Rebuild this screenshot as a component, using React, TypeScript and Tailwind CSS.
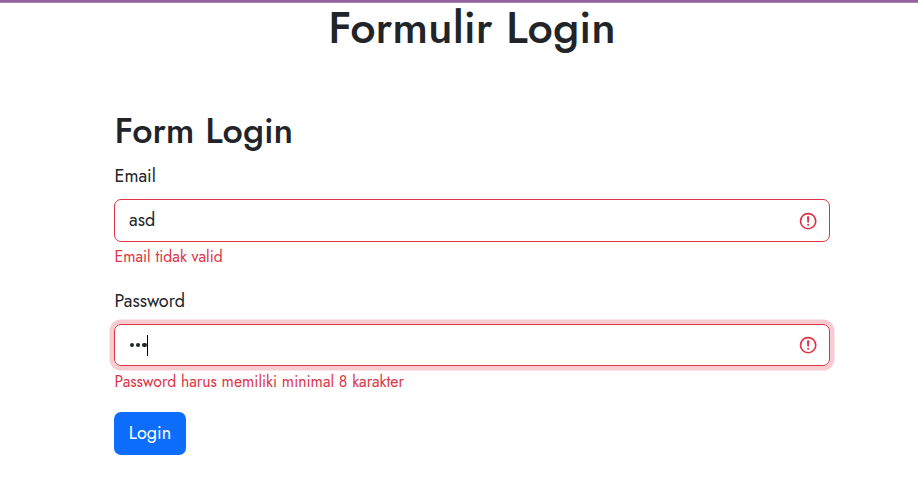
import React from "react";

function ErrorIcon({ className }: { className: string }) {
  return (
    <svg viewBox="0 0 12 12" className={"size-[20.25px] shrink-0 " + className} fill="none" stroke="#dc3545">
      <circle cx="6" cy="6" r="4.5" />
      <path strokeLinejoin="round" d="M5.8 3.6h.4L6 6.5z" />
      <circle cx="6" cy="8.2" r=".6" fill="#dc3545" stroke="none" />
    </svg>
  );
}

type FieldProps = {
  label: string;
  error: string;
  focused?: boolean;
  children: React.ReactNode;
};

function Field({ label, error, focused, children }: FieldProps) {
  return (
    <div className="h-[125px]">
      <div className="flex h-[27px] items-center pl-[0.5px] text-[18px]">
        <span>{label}</span>
      </div>
      <div
        className={
          "mt-[9px] flex items-center justify-between rounded-[7px] border border-[#dc3545] pr-[11px] pl-[14px] text-[18px] " +
          (focused ? "h-[42px] shadow-[0_0_0_4.5px_rgba(220,53,69,0.25)]" : "h-[43px]")
        }
      >
        {children}
        <ErrorIcon className={focused ? "" : "mt-px"} />
      </div>
      <div
        className={
          "flex h-[23px] items-center pl-[0.5px] text-[15.75px] text-[#dc3545] " +
          (focused ? "mt-[4px]" : "mt-[3px]")
        }
      >
        <span>{error}</span>
      </div>
    </div>
  );
}

function PasswordDot() {
  return <i className="size-[4.5px] rounded-full bg-[#212529]" />;
}

export default function App() {
  return (
    <div className="h-[481px] bg-white font-['Jost','Lato',sans-serif] whitespace-nowrap text-[#212529]">
      <div className="h-[3px] border-b border-[#a884b2] bg-[#93629f]" />
      <main className="ml-[114px] w-[716px]">
        <h1 className="flex h-[50px] items-center justify-center text-[45px] font-medium">
          <span>Formulir Login</span>
        </h1>
        <h2 className="mt-[55px] flex h-[44px] items-center pl-[0.5px] text-[36px] font-medium">
          <span>Form Login</span>
        </h2>
        <div className="mt-[11px]">
          <Field label="Email" error="Email tidak valid">
            <span>asd</span>
          </Field>
          <Field label="Password" error="Password harus memiliki minimal 8 karakter" focused>
            <span className="flex items-center">
              <span className="flex gap-[1.75px] pr-[0.5px] pl-[0.5px]">
                <PasswordDot />
                <PasswordDot />
                <PasswordDot />
              </span>
              <span className="h-[21px] w-px bg-black" />
            </span>
          </Field>
        </div>
        <button className="-mt-[1px] flex h-[43px] w-[72px] items-center justify-center rounded-[7px] bg-[#0d6efd] text-[18px] text-white">
          <span>Login</span>
        </button>
      </main>
    </div>
  );
}
